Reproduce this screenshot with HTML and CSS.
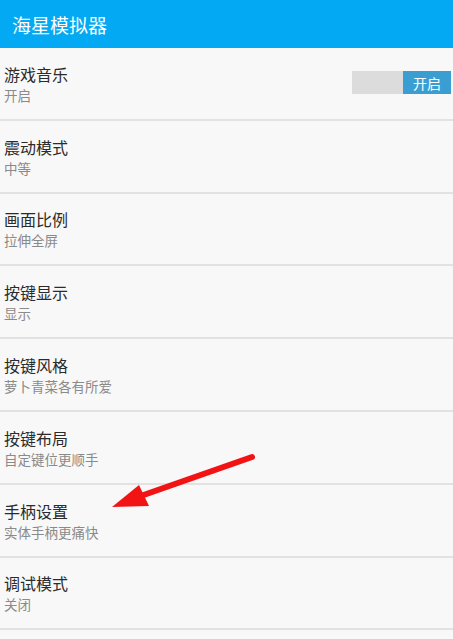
FILE: index.html
```html
<!DOCTYPE html>
<html lang="zh">
<head>
<meta charset="utf-8">
<link rel="stylesheet" href="styles.css">
</head>
<body>
<div class="app">
  <header class="bar"><span class="bar-title">海星模拟器</span></header>
  <ul class="list">
    <li class="row">
      <div class="texts"><div class="t">游戏音乐</div><div class="s">开启</div></div>
      <div class="toggle"><span class="track"></span><span class="knob">开启</span></div>
    </li>
    <li class="row"><div class="texts"><div class="t">震动模式</div><div class="s">中等</div></div></li>
    <li class="row"><div class="texts"><div class="t">画面比例</div><div class="s">拉伸全屏</div></div></li>
    <li class="row"><div class="texts"><div class="t">按键显示</div><div class="s">显示</div></div></li>
    <li class="row"><div class="texts"><div class="t">按键风格</div><div class="s">萝卜青菜各有所爱</div></div></li>
    <li class="row"><div class="texts"><div class="t">按键布局</div><div class="s">自定键位更顺手</div></div></li>
    <li class="row"><div class="texts"><div class="t">手柄设置</div><div class="s">实体手柄更痛快</div></div></li>
    <li class="row"><div class="texts"><div class="t">调试模式</div><div class="s">关闭</div></div></li>
  </ul>
  <svg class="arrow" width="453" height="639" viewBox="0 0 453 639">
    <line x1="252" y1="457" x2="135" y2="498" stroke="#f21414" stroke-width="6" stroke-linecap="round"/>
    <polygon points="112,507 139,485 149,506" fill="#f21414"/>
  </svg>
</div>
</body>
</html>
```
FILE: styles.css
```css
* { box-sizing: border-box; }
html, body { margin: 0; padding: 0; }
body {
  width: 453px; height: 639px; overflow: hidden;
  background: #f8f8f8;
  font-family: "Noto Sans CJK SC", "Noto Sans", sans-serif;
}
.app { position: relative; width: 453px; height: 639px; overflow: hidden; }
.bar {
  height: 48px;
  background: #03a9f2;
  display: flex; align-items: center;
  padding-left: 12px;
}
.bar-title { color: #fff; font-size: 19px; line-height: 1; }
.list { list-style: none; margin: 0; padding: 0; }
.row {
  height: 72.8px;
  border-bottom: 2px solid #e2e2e2;
  display: flex; align-items: center; justify-content: space-between;
  padding: 1px 2px 0 4px;
}
.texts { display: flex; flex-direction: column; gap: 3px; }
.t { font-size: 16px; color: #2b2b2b; line-height: 19px; }
.s { font-size: 13.5px; color: #8a8a8a; line-height: 16px; }
.toggle { display: flex; height: 23px; margin-bottom: 2px; }
.track { width: 51px; background: #dcdcdc; }
.knob {
  width: 48px; background: #3a9ed3; color: #fff;
  font-size: 14px; display: flex; align-items: center; justify-content: center;
}
.arrow { position: absolute; left: 0; top: 0; pointer-events: none; }
```
